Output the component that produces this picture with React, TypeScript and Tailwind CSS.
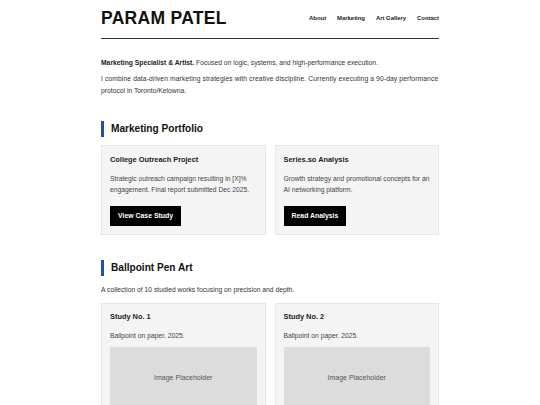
export default function App() {
  return (
    <div className="min-h-screen bg-white text-[#333] font-['Liberation_Sans',Arial,sans-serif]">
      <div className="mx-auto w-[338px]">
        <header className="flex items-center justify-between border-b-[1.5px] border-[#333] pt-[10px] pb-[11px]">
          <h1 className="text-[17.5px] font-bold leading-[17px] tracking-[0.3px] text-[#111]">PARAM PATEL</h1>
          <nav className="flex gap-[11px] text-[5.9px] font-bold text-[#222]">
            <span>About</span>
            <span>Marketing</span>
            <span>Art Gallery</span>
            <span>Contact</span>
          </nav>
        </header>

        <section className="pt-[18px] text-[6.75px] leading-[12px]">
          <p>
            <strong className="text-[#222]">Marketing Specialist &amp; Artist.</strong> Focused on logic, systems, and
            high-performance execution.
          </p>
          <p className="mt-[4px]">
            <span className="whitespace-nowrap tracking-[0.1px]">
              I combine data-driven marketing strategies with creative discipline. Currently executing a 90-day performance
            </span>
            <br />
            protocol in Toronto/Kelowna.
          </p>
        </section>

        <section className="pt-[24px]">
          <h2 className="border-l-[3px] border-[#1f4fa8] pl-[7px] text-[10.1px] font-bold leading-[16px] text-[#111]">
            Marketing Portfolio
          </h2>
          <div className="mt-[8px] grid grid-cols-2 gap-[9px]">
            <div className="border border-[#e6e6e6] bg-[#f4f4f4] px-[8px] pt-[9px] pb-[8px]">
              <h3 className="text-[7.4px] font-bold leading-[10px] text-[#222]">College Outreach Project</h3>
              <p className="mt-[8px] text-[6.75px] leading-[11px] text-[#444]">
                Strategic outreach campaign resulting in [X]% engagement. Final report submitted Dec 2025.
              </p>
              <button className="mt-[11px] bg-black px-[8px] py-[5px] text-[6.9px] font-bold leading-[10px] text-white">
                View Case Study
              </button>
            </div>
            <div className="border border-[#e6e6e6] bg-[#f4f4f4] px-[8px] pt-[9px] pb-[8px]">
              <h3 className="text-[7.4px] font-bold leading-[10px] text-[#222]">Series.so Analysis</h3>
              <p className="mt-[8px] text-[6.75px] leading-[11px] text-[#444]">
                Growth strategy and promotional concepts for an AI networking platform.
              </p>
              <button className="mt-[11px] bg-black px-[8px] py-[5px] text-[6.9px] font-bold leading-[10px] text-white">
                Read Analysis
              </button>
            </div>
          </div>
        </section>

        <section className="pt-[25px]">
          <h2 className="border-l-[3px] border-[#1f4fa8] pl-[7px] text-[10.1px] font-bold leading-[16px] text-[#111]">
            Ballpoint Pen Art
          </h2>
          <p className="mt-[8px] text-[6.75px] leading-[11px]">A collection of 10 studied works focusing on precision and depth.</p>
          <div className="mt-[8px] grid grid-cols-2 gap-[9px]">
            {[1, 2].map((n) => (
              <div key={n} className="border border-[#e6e6e6] bg-[#f4f4f4] px-[8px] pt-[8px] pb-[8px]">
                <h3 className="text-[7.4px] font-bold leading-[10px] text-[#222]">Study No. {n}</h3>
                <p className="mt-[8px] text-[6.75px] leading-[11px] text-[#444]">Ballpoint on paper. 2025.</p>
                <div className="mt-[6px] flex h-[62px] items-center justify-center bg-[#dcdcdc] text-[7px] text-[#555]">
                  Image Placeholder
                </div>
              </div>
            ))}
          </div>
        </section>
      </div>
    </div>
  )
}
